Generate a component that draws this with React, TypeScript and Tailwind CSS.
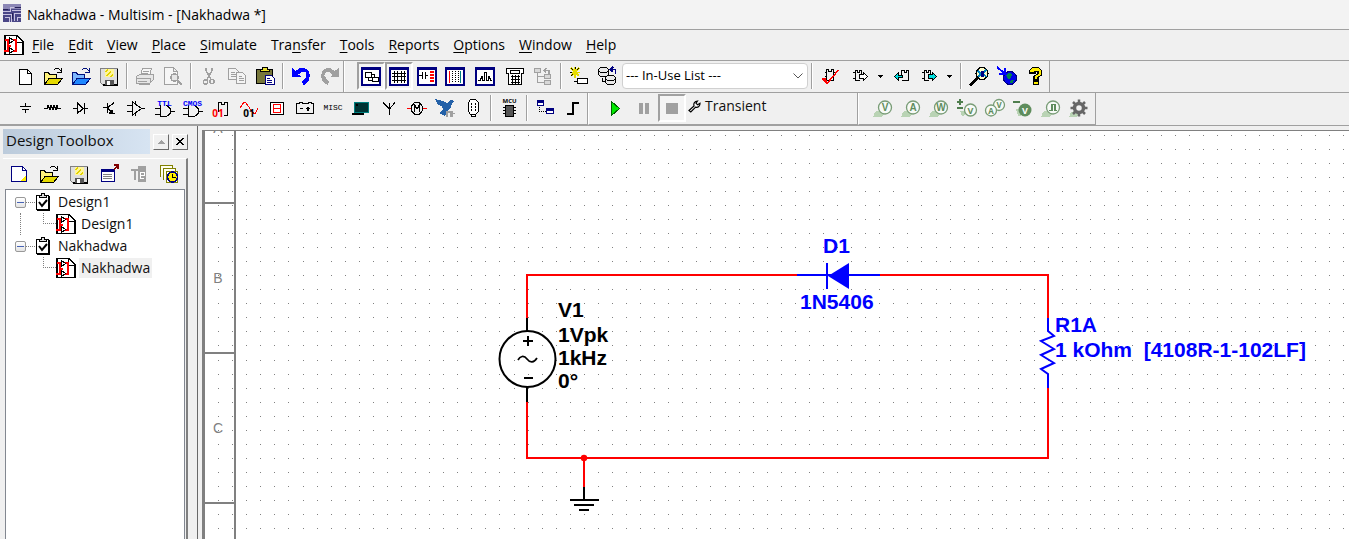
import React from "react";

type Kids = { children: React.ReactNode };

const K = "#000";
const N = "#000080";
const B = "#0000ff";
const R = "#ff0000";
const G = "#a0a0a0";

function Icon({ children }: Kids) {
  return (
    <svg
      width="20"
      height="20"
      viewBox="0 0 20 20"
      fill="none"
      stroke={K}
      shapeRendering="crispEdges"
      className="shrink-0 overflow-visible"
      aria-hidden="true"
    >
      {children}
    </svg>
  );
}

function Tool({ label, children, pressed = false }: Kids & { label: string; pressed?: boolean }) {
  return (
    <button
      type="button"
      aria-label={label}
      className={
        pressed
          ? "flex h-7 w-7 shrink-0 items-center justify-center border-2 border-b-white border-l-[#a0a0a0] border-r-white border-t-[#a0a0a0] bg-[#f4f4f4]"
          : "flex h-7 w-7 shrink-0 items-center justify-center"
      }
    >
      <Icon>{children}</Icon>
    </button>
  );
}

function Sep() {
  return <span className="mx-[3px] h-[26px] w-0.5 shrink-0 border-l border-r border-l-[#a0a0a0] border-r-white" />;
}

function Bar({ children, className = "" }: Kids & { className?: string }) {
  return (
    <div
      className={
        "flex items-center border-r border-r-[#a0a0a0] border-b-[#a0a0a0] pb-px " + className
      }
    >
      {children}
    </div>
  );
}

function SchematicFile() {
  return (
    <svg width="20" height="20" viewBox="0 0 20 20" fill="none" stroke={K} shapeRendering="crispEdges" className="shrink-0" aria-hidden="true">
      <path d="M1 .5h12l6 6v13H1z" fill="#fff" strokeWidth="1.4" />
      <path d="M12.5 .5v7h7" />
      <path d="M1 4.500h4M4 4v12M0 16h5M4 10.500h3M9 5h3v10.500H8" stroke={R} strokeWidth="2" />
      <path d="M5.500 2.500v6l4-3zM5.500 12.500v6l4-3z" fill="#fff" />
    </svg>
  );
}

function OpenFolder({ back, flap, line }: { back: string; flap: string; line: string }) {
  return (
    <>
      <path d="M1.500 18.500V6.500h4l1 2h7v3.500h4" fill={back} stroke={line} />
      <path d="M1.500 18.500l4.500-6h13.500l-5 6z" fill={flap} stroke={line} />
      <path d="M10.500 4.500l2-2h3l3 3M18.500 1.500v5h-5" stroke={line} />
    </>
  );
}

function Floppy() {
  return (
    <>
      <path d="M1.500 2.500h17v16h-15l-2-2z" fill="#dedede" stroke="#808080" />
      <path d="M18.500 2.500v16.500h-15" stroke={K} strokeWidth="1.500" />
      <path d="M6 3h9v8H6z" fill="#fff69a" stroke="none" />
      <path d="M6 5h1V4h1V3h1M7 9h1V8h1V7h1V6h1V5h1M11 10h1V9h1V8h1" stroke="#e3d200" />
      <path d="M6 14h9v5H6z" fill="#555" stroke="none" />
      <path d="M8 15h3v4H8z" fill="#fff" stroke="none" />
    </>
  );
}

function Gate({ label }: { label: string }) {
  return (
    <>
      <path d="M5.500 7v11.500h6l4-3v-5l-4-3M0 10.500h5M0 16.500h5M15.500 13.500H20" strokeWidth="1.200" />
      <text x="9.500" y="8" fontSize="8" fontWeight="700" textAnchor="middle" fill={B} stroke="none" className="font-[Liberation_Mono,monospace]">
        {label}
      </text>
    </>
  );
}

function Frame({ children }: Kids) {
  return (
    <>
      <path d="M1 2h18v17H1z" fill="#fff" stroke={N} strokeWidth="2" />
      <path d="M0 2.500h20" stroke={N} strokeWidth="3" />
      {children}
    </>
  );
}

function Probe({ letter }: { letter: string }) {
  return (
    <>
      <path d="M0 19l2-5 5-2 4 4-3 3z" fill="#b9d3b4" stroke="none" />
      <circle cx="12" cy="9.500" r="6.500" fill="#f7faf7" stroke="#789c76" strokeWidth="1.300" shapeRendering="auto" />
      <text x="12" y="13" fontSize="10" fontWeight="700" textAnchor="middle" fill="#5f8d5d" stroke="none" className="font-[Liberation_Sans,sans-serif]">
        {letter}
      </text>
    </>
  );
}

function Dropper({ label }: { label: string }) {
  return (
    <button type="button" aria-label={label} className="flex h-7 w-[13px] shrink-0 items-center pl-[3px]">
      <svg width="5" height="3" viewBox="0 0 5 3" shapeRendering="crispEdges" aria-hidden="true">
        <path d="M0 0h5v1H4v1H3v1H2V2H1V1H0z" />
      </svg>
    </button>
  );
}

const menus: [string, string, string][] = [
  ["", "F", "ile"],
  ["", "E", "dit"],
  ["", "V", "iew"],
  ["", "P", "lace"],
  ["", "S", "imulate"],
  ["Tra", "n", "sfer"],
  ["", "T", "ools"],
  ["", "R", "eports"],
  ["", "O", "ptions"],
  ["", "W", "indow"],
  ["", "H", "elp"],
];

function StandardToolbar() {
  return (
    <div className="flex h-8 w-full shrink-0 border-b border-[#a0a0a0]">
      <Bar className="pl-[11px]">
        <Tool label="New">
          <path d="M4.500 3.500h8l4 4v11h-12z" fill="#fff" strokeWidth="1.300" />
          <path d="M12.500 3.500v4h4" />
        </Tool>
        <Tool label="Open">
          <OpenFolder back="#fff27a" flap="#e5d900" line="#000" />
        </Tool>
        <Tool label="Open sample">
          <OpenFolder back="#7db7ff" flap="#1f87ff" line="#00107c" />
        </Tool>
        <Tool label="Save">
          <Floppy />
        </Tool>
        <Sep />
        <Tool label="Print">
          <g stroke={G}>
            <path d="M5.500 9.500l2-7h9l-2 7M8 5.500h6M7 7.500h6" fill="#f6f6f6" />
            <path d="M1.500 10.500l3-2h14v5l-4 4h-13z" fill="#e6e6e6" />
            <path d="M1 12.500h14M15.500 12v5M3 15.500h9M4 18.500h11" strokeWidth="1.500" />
          </g>
        </Tool>
        <Tool label="Print preview">
          <g stroke={G}>
            <path d="M1.500 1.500h9l4 4v13h-13zM10.500 1.500v4h4" fill="#f6f6f6" />
            <circle cx="11.500" cy="11.500" r="3.500" fill="#e6e6e6" strokeWidth="1.500" />
            <path d="M14 14l5 5" strokeWidth="2.500" />
          </g>
        </Tool>
        <Sep />
        <Tool label="Cut">
          <g stroke={G} strokeWidth="1.500">
            <path d="M7 1.500v3l5 9M13 1.500v3l-5 9" />
            <circle cx="6.500" cy="16" r="2" />
            <circle cx="13" cy="15.500" r="2" />
          </g>
        </Tool>
        <Tool label="Copy">
          <g stroke={G}>
            <path d="M1.500 2.500h7l3 3v8h-10zM4 6.500h4M4 8.500h5M4 10.500h5" fill="#f4f4f4" />
            <path d="M9.500 6.500h6l3 3v8h-9zM12 10.500h3M12 12.500h5M12 14.500h5" fill="#f4f4f4" />
          </g>
        </Tool>
        <Tool label="Paste">
          <path d="M1.500 3.500h16v14h-16z" fill="#77773b" strokeWidth="1.500" />
          <path d="M5 5.500V3h2V1h5v2h2v2.500z" fill="#e9df2d" />
          <path d="M10.500 9.500h6l3 3v6h-9z" fill="#fff" stroke={N} />
          <path d="M12 12.500h3M12 14.500h5M12 16.500h5" stroke={N} />
        </Tool>
        <Sep />
        <Tool label="Undo">
          <path d="M1 2v9h9L7.500 8.500l4-3 3 1 1 3-1.500 3-3 3 1 3.500 3-1 3-4 1-5-2-5-4-2H9L4.500 5z" fill={B} stroke="none" />
        </Tool>
        <Tool label="Redo">
          <path d="M20 2v9h-9l2.500-2.500-4-3-3 1-1 3 1.500 3 3 3-1 3.500-3-1-3-4-1-5 2-5 4-2h3l4.500 3z" fill={G} stroke="none" />
        </Tool>
      </Bar>
      <Bar className="border-l border-l-white pl-3">
        <Tool label="Design toolbox" pressed>
          <Frame>
            <path d="M4.500 6.500h6v5h-6zM11.500 11.500h6v4h-6zM7.500 11.500v3h4M10.500 8.500h3v3" strokeWidth="1.400" />
          </Frame>
        </Tool>
        <Tool label="Spreadsheet" pressed>
          <Frame>
            <path d="M3 7.500h14M3 10.500h14M3 14.500h14M5.500 5v12M8.500 5v12M12.500 5v12M15.500 5v12" strokeWidth="1.200" />
          </Frame>
        </Tool>
        <Tool label="Database manager">
          <Frame>
            <path d="M2 9.500h3M5.500 6v7M8.500 6v7M8 9.500h3" strokeWidth="1.400" />
            <path d="M13 5.500h4M13 8.500h4M13 11.500h4M13 14.500h4" stroke={R} strokeWidth="2" />
          </Frame>
        </Tool>
        <Tool label="Breadboard">
          <Frame>
            <path d="M4.500 5v12" stroke={R} />
            <path d="M15.500 5v12" stroke="#008080" />
            <path d="M7.500 5v12M10.500 5v12M13.500 5v12" strokeDasharray="1 1" />
          </Frame>
        </Tool>
        <div className="w-0.5" />
        <Tool label="Grapher">
          <Frame>
            <path d="M3 14.500h2l2-4 1 4h1l1-8h1l1 8h1l1-4 2 4h1" strokeWidth="1.200" />
          </Frame>
        </Tool>
        <div className="w-0.5" />
        <Tool label="Postprocessor">
          <path d="M1.500 2.500h17v5h-2v11h-13v-11h-2z" fill="#fff" strokeWidth="1.500" />
          <path d="M5.500 4.500h9v3h-9zM6 10.500h9M6 13.500h9M6 16.500h9M7.500 9v9M10.500 9v9M13.500 9v9" />
        </Tool>
        <Tool label="Parent sheet">
          <g stroke={G} fill="#d8d8d8">
            <path d="M1.500 2.500h6v4h-6zM11.500 8.500h6v4h-6zM11.500 14.500h6v4h-6z" />
            <path d="M4.500 7v9.500h7M4.500 10.500h7M11 4.500h5v3M13 2l-2 2.500 2 2" fill="none" strokeWidth="1.500" />
          </g>
        </Tool>
        <Sep />
        <Tool label="Create component">
          <path d="M6 1v11M1 6.500h10M2 2l8 8M10 2l-8 8" stroke="#e7dc00" strokeWidth="1.700" />
          <path d="M6 1v2M1 6h2M2 2l2 2M10 2L8 4M2 10l2-2" />
          <path d="M8.500 12.500h10v5h-10zM5 15.500h4" fill="#fff" strokeWidth="1.500" />
        </Tool>
        <Tool label="Database">
          <g fill="#e8e8e8">
            <path d="M1.500 3.500l2-2h6l2 2v5l-2 2h-6l-2-2z" />
            <path d="M1.500 4.500l2 2h6l2-2" />
            <path d="M8.500 11.500l2-2h6l2 2v5l-2 2h-6l-2-2z" />
            <path d="M8.500 12.500l2 2h6l2-2M5.500 11.500v4h3" />
            <path d="M14 3.500h4.500v4M16 1l-2.500 2.500L16 6" stroke={N} fill="none" strokeWidth="1.500" />
          </g>
        </Tool>
        <div className="relative ml-px flex shrink-0">
          <select
            aria-label="In-use components"
            className="h-[26px] w-[186px] appearance-none rounded-sm border border-[#d0d0d0] bg-white pl-[3px] text-[13px] text-black"
            defaultValue="list"
          >
            <option value="list">--- In-Use List ---</option>
          </select>
          <svg width="10" height="6" viewBox="0 0 10 6" fill="none" stroke="#555" className="pointer-events-none absolute right-[5px] top-2.5" aria-hidden="true">
            <path d="M.5 .5L5 5 9.500 .5" />
          </svg>
        </div>
        <Sep />
        <Tool label="Electrical rules check">
          <path d="M6.500 14V3.500h2v2h3v-2h2V14M6 14.500h8M5 6.500h1M5 10.500h1M14 6.500h1" strokeWidth="1.200" />
          <path d="M2 12.500l5 5L18.500 4" stroke={R} strokeWidth="1.500" />
          <path d="M2 12h4l1 4-1 2z" fill={R} stroke="none" />
        </Tool>
        <div className="w-[3px]" />
        <Tool label="Transfer to layout">
          <path d="M4.500 14.500v-10h2v2h2v-2h2v4M4 14.500h5M2 6.500h2M2 12.500h2" strokeWidth="1.300" />
          <path d="M8.500 8.500h4v-2l4 4-4 4v-2h-4z" fill="#fff" />
        </Tool>
        <Dropper label="Transfer options" />
        <Tool label="Back annotate">
          <path d="M9.500 14.500h7v-10h-2v2h-2v-2h-3v4" strokeWidth="1.300" />
          <path d="M10.500 9.500h-4v-3l-4 4 4 4v-3h4z" fill="#00dede" />
        </Tool>
        <Tool label="Forward annotate">
          <path d="M4.500 14.500v-10h2v2h2v-2h2v4M4 14.500h5M2 6.500h2M2 12.500h2" strokeWidth="1.300" />
          <path d="M8.500 8.500h4v-2l4 4-4 4v-2h-4z" fill="#00dede" />
        </Tool>
        <Dropper label="Forward annotate options" />
        <Sep />
        <Tool label="Find examples">
          <path d="M1 19.500l8-8" strokeWidth="2.500" />
          <circle cx="13" cy="7.500" r="6" fill="#fffec6" strokeWidth="1.300" />
          <path d="M9 5l3 3-3 3M17 4l-3 3 3 4" stroke="#0080c0" strokeWidth="1.500" />
          <path d="M12 5h2v5h-2z" fill={N} stroke={N} />
        </Tool>
        <Tool label="Educational website">
          <circle cx="13" cy="12" r="6.500" fill="#0000e8" stroke={N} />
          <path d="M9 9l3-2 3 1-1 4-3 1zM14 14h3l-1 3h-3z" fill="#008050" stroke="none" />
          <path d="M0 1l7 6M2 7.500h5.500V2" stroke={B} strokeWidth="2" />
        </Tool>
        <Tool label="Help">
          <path d="M4.500 7V4.500l3-3h6l3 3V9l-3.500 2.500V14h-4v-4l4-2V5.500h-3V7z" fill="#ffee00" strokeWidth="1.200" />
          <path d="M8.500 15.500h5v3h-5z" fill="#ffee00" strokeWidth="1.200" />
        </Tool>
      </Bar>
    </div>
  );
}

function ComponentToolbar() {
  return (
    <div className="flex h-8 w-full shrink-0">
      <Bar className="border-b pl-[11px]">
        <Tool label="Place source">
          <path d="M5 8.500h11M10.500 5v3M7 11.500h7M10.500 12v3" strokeWidth="1.400" />
        </Tool>
        <Tool label="Place basic">
          <path d="M1 10.500h3l1-3 2 4 1-4 2 4 1-4 2 4 1-4 1 3h3" />
        </Tool>
        <Tool label="Place diode">
          <path d="M2 10.500h4M6.500 5v10l6-4.500zM13.500 5v11M13 10.500h4" strokeWidth="1.300" />
        </Tool>
        <Tool label="Place transistor">
          <path d="M4 9.500h4M8.500 5v10M9 9.500l6-5M9 10.500l5 5h2M13 12v3h-3" strokeWidth="1.300" />
        </Tool>
        <Tool label="Place analog">
          <path d="M5.500 4v13l9-6.500zM0 7.500h5M0 13.500h5M14 10.500h4M8 5.500l1-2M8 15.500l1 2" />
        </Tool>
        <Tool label="Place TTL">
          <Gate label="TTL" />
        </Tool>
        <Tool label="Place CMOS">
          <Gate label="CMOS" />
        </Tool>
        <Tool label="Place misc digital">
          <path d="M7.500 14V4.500h3v2h3v-2h3v13h-4" strokeWidth="1.300" />
          <text x="7" y="19" fontSize="10" fontWeight="700" textAnchor="middle" fill={R} stroke="none">01</text>
        </Tool>
        <Tool label="Place mixed">
          <path d="M1 10l4-6h1l4 5 3 5 3 2 3-6" stroke={R} />
          <text x="10" y="19" fontSize="10" fontWeight="700" textAnchor="middle" fill={K} stroke="none">01</text>
        </Tool>
        <Tool label="Place indicator">
          <path d="M3.500 4.500h13v12h-13z" fill="#fff" strokeWidth="1.300" />
          <path d="M6 6.500h8M6 10.500h8M6 14.500h8M6.500 6v9M13.500 6v9" stroke={R} strokeWidth="1.300" />
        </Tool>
        <Tool label="Place power">
          <path d="M1.500 5.500h3v-1h3v1h6v-1h3v1h2v10h-17zM5 10.500h3M11 10.500h4M13 9v3.500" strokeWidth="1.200" />
        </Tool>
        <Tool label="Place miscellaneous">
          <text x="10" y="12" fontSize="8" textAnchor="middle" fill={K} stroke="none" className="font-[Liberation_Mono,monospace]">MISC</text>
        </Tool>
        <Tool label="Place advanced peripherals">
          <path d="M3.500 4.500h14v10h-14z" fill="#003434" stroke="#008080" strokeWidth="1.500" />
          <path d="M1 15.500h12M5 6.500h2" strokeWidth="2" />
        </Tool>
        <Tool label="Place RF">
          <path d="M10.500 5v12M4 4.500l6 6h1l5-6" />
        </Tool>
        <Tool label="Place electromechanical">
          <path d="M0 10.500h4M16 10.500h4" stroke={R} strokeWidth="1.500" />
          <path d="M4.500 8.500l3-4h5l3 4v4l-3 4h-5l-3-4zM7.500 14V7l2.500 4 2.500-4v7" strokeWidth="1.200" />
        </Tool>
        <Tool label="Place NI component">
          <path d="M0 1l8 2 4 2 4-3 3 1-2 2-1 5-4 3-2 5-6-3 4-3-1-4-4-1z" fill="#2461a8" stroke="none" />
          <path d="M12 19v-5h4v5M17.500 13v6M16.500 15.500h3" stroke={G} strokeWidth="1.500" />
        </Tool>
        <Tool label="Place connector">
          <path d="M5.500 4.500l2-3h5l3 3v9l-3 3h-5l-2-3zM8.500 17v1.500h4V16" fill="#fff" />
          <path d="M8.500 5v9M12.500 5v9" strokeDasharray="2 1" />
        </Tool>
        <Sep />
        <Tool label="Place MCU">
          <path d="M6.500 7.500h8v11h-8zM4 9.500h2M4 12.500h2M4 15.500h2M14 9.500h3M14 12.500h3M14 15.500h3" fill="#555" strokeWidth="1.500" />
          <text x="10.500" y="5" fontSize="6" fontWeight="700" textAnchor="middle" fill={K} stroke="none">MCU</text>
        </Tool>
        <Sep />
        <Tool label="Place hierarchical block">
          <path d="M2.500 3.500h6v4h-6zM11.500 11.500h7v4h-7z" fill="#fff" stroke={N} />
          <path d="M2 3.500h7M11 11.500h8" stroke={N} strokeWidth="2.500" />
          <path d="M4.500 9v4.500h6" strokeDasharray="1 1" />
        </Tool>
        <Tool label="Place bus">
          <path d="M4 16h6V5h6" strokeWidth="1.700" />
        </Tool>
      </Bar>
      <Bar className="w-[270px] border-b border-l border-l-white pl-[13px]">
        <Tool label="Run">
          <path d="M5.500 3.500v14l8-7z" fill="#00e800" stroke="#006000" />
        </Tool>
        <Tool label="Pause">
          <path d="M5 5h4v11H5zM11 5h4v11h-4z" fill={G} stroke="none" />
        </Tool>
        <Tool label="Stop" pressed>
          <path d="M4 5h12v11H4z" fill={G} stroke="none" />
        </Tool>
        <button type="button" className="ml-0.5 flex h-7 items-center gap-1 pb-1 text-sm text-[#101010]">
          <svg width="13" height="13" viewBox="0 0 13 13" fill="#fff" stroke={K} strokeWidth="1.200" aria-hidden="true">
            <path d="M1 10.500L6 6c-.8-2.500.7-4.800 3.500-5L8 3.200l1.600 1.600L12 3.300c.2 2.700-2 4.600-4.400 3.900L2.800 12z" />
          </svg>
          Transient
        </button>
      </Bar>
      <Bar className="border-b border-l border-l-white pl-2.5 pr-0.5">
        <Tool label="Voltage probe"><Probe letter="V" /></Tool>
        <Tool label="Current probe"><Probe letter="A" /></Tool>
        <Tool label="Power probe"><Probe letter="W" /></Tool>
        <Tool label="Differential probe">
          <path d="M0 3.500h6M3 1v6M0 10h6" stroke="#4f7e4e" strokeWidth="2" />
          <path d="M3 13h5v4l-3 1z" fill="#b9d3b4" stroke="none" />
          <circle cx="13.500" cy="12" r="6" fill="#f7faf7" stroke="#789c76" strokeWidth="1.300" shapeRendering="auto" />
          <text x="13.500" y="15.500" fontSize="9" fontWeight="700" textAnchor="middle" fill="#5f8d5d" stroke="none">V</text>
        </Tool>
        <Tool label="Voltage and current probe">
          <g fill="#f7faf7" stroke="#789c76" strokeWidth="1.300" shapeRendering="auto">
            <circle cx="14" cy="7" r="5.500" />
            <circle cx="6" cy="12.500" r="5.500" />
          </g>
          <g fontSize="8" fontWeight="700" textAnchor="middle" fill="#5f8d5d" stroke="none">
            <text x="14" y="10">V</text>
            <text x="6" y="15.500">A</text>
          </g>
        </Tool>
        <Tool label="Reference probe">
          <path d="M0 4h7" stroke="#4f7e4e" strokeWidth="2" />
          <path d="M3 11l5-1 2 7-5 1z" fill="#b9d3b4" stroke="none" />
          <circle cx="12" cy="12" r="6.500" fill="#5f8d5d" stroke="none" shapeRendering="auto" />
          <text x="12" y="15.500" fontSize="9" fontWeight="700" textAnchor="middle" fill="#fff" stroke="none">V</text>
        </Tool>
        <Tool label="Digital probe">
          <Probe letter="" />
          <path d="M8 12.500h3v-6h3v6h2" stroke="#5f8d5d" strokeWidth="1.300" />
        </Tool>
        <Tool label="Probe settings">
          <path d="M0 19l2-5 4-1 4 3-3 3z" fill="#b9d3b4" stroke="none" />
          <g stroke="#666" shapeRendering="auto">
            <circle cx="10" cy="10" r="4.500" strokeWidth="3.500" />
            <path d="M10 1.500v4M10 14.500v4M1.500 10h4M14.500 10h4M4 4l3 3M13 13l3 3M4 16l3-3M13 7l3-3" strokeWidth="2.500" />
          </g>
        </Tool>
      </Bar>
    </div>
  );
}

function Check() {
  return (
    <svg width="16" height="18" viewBox="0 0 16 18" fill="none" stroke={K} shapeRendering="crispEdges" className="shrink-0" aria-hidden="true">
      <path d="M1.500 2.500h12v14h-12z" fill="#fff" />
      <path d="M14 3v14H2" strokeWidth="2" />
      <path d="M4.500 4.500v-2h2v-2h3v2h2v2z" fill="#ddd" />
      <path d="M4 9l3 4L12 7" strokeWidth="2" shapeRendering="auto" />
    </svg>
  );
}

function Design({ name, last = false }: { name: string; last?: boolean }) {
  return (
    <li>
      <div className="flex h-[22px] items-center">
        <button type="button" aria-label={"Collapse " + name} className="flex h-[11px] w-[11px] items-center justify-center rounded-xs border border-[#999] bg-gradient-to-b from-white to-[#e4e4e4]">
          <span className="h-px w-[7px] bg-[#4763b5]" />
        </button>
        <span className="w-[9px] border-t border-dotted border-[#808080]" />
        <Check />
        <span className="ml-[7px]">{name}</span>
      </div>
      <ul className={last ? "ml-[5px] border-l border-transparent" : "ml-[5px] border-l border-dotted border-[#808080]"}>
        <li className="flex h-[22px] items-center pl-[22px]">
          <span className="mb-[11px] h-[11px] w-[13px] border-b border-l border-dotted border-[#808080]" />
          <SchematicFile />
          <span className={last ? "ml-[3px] bg-[#f0f0f0] px-0.5" : "ml-[3px] px-0.5"}>{name}</span>
        </li>
      </ul>
    </li>
  );
}

function DesignToolbox() {
  return (
    <aside className="flex w-[197px] shrink-0 flex-col pl-[3px] pr-[9px] pt-[3px]">
      <header className="flex h-[25px] items-center gap-[3px]">
        <h2 className="flex h-full w-[147px] items-center bg-gradient-to-r from-[#bccbdb] to-[#d7e4f2] pb-[3px] pl-[3px] text-[15px] text-[#101010]">Design Toolbox</h2>
        <button type="button" aria-label="Roll up" className="flex h-4 w-4 items-center justify-center border border-b-[#696969] border-l-white border-r-[#696969] border-t-white">
          <svg width="7" height="4" viewBox="0 0 7 4" shapeRendering="crispEdges" aria-hidden="true"><path d="M0 4l3.500-4L7 4z" fill={G} /></svg>
        </button>
        <button type="button" aria-label="Close" className="flex h-4 w-4 items-center justify-center border border-b-[#696969] border-l-white border-r-[#696969] border-t-white">
          <svg width="8" height="7" viewBox="0 0 8 7" shapeRendering="crispEdges" stroke={K} strokeWidth="2" aria-hidden="true"><path d="M.5 0l7 7M7.500 0l-7 7" /></svg>
        </button>
      </header>
      <div className="mt-1 flex flex-1 flex-col border-r-2 border-t border-r-[#808080] border-t-white">
        <div className="flex h-[30px] shrink-0 items-center gap-[2px] pl-0.5">
          <Tool label="New design">
            <path d="M2.500 2.500h11l4 4v11h-15z" fill="#fff" stroke={N} strokeWidth="1.400" />
            <path d="M13.500 2.500v4h4" stroke={N} />
            <path d="M17 11v6h-6z" fill="#ffee00" stroke="none" />
          </Tool>
          <Tool label="Open design"><OpenFolder back="#fff27a" flap="#e5d900" line="#000" /></Tool>
          <Tool label="Save design"><Floppy /></Tool>
          <Tool label="Close design">
            <path d="M2.500 5.500h13v12h-13z" fill="#fff" stroke={N} />
            <path d="M2 6h14" stroke={N} strokeWidth="3" />
            <path d="M4 10.500h9M4 12.500h9M4 14.500h9" stroke="#808080" />
            <path d="M15 5l4-3M15 1h4v4" stroke="#800000" strokeWidth="1.500" />
          </Tool>
          <Tool label="Rename">
            <path d="M2 5h8v2H7v9H5V7H2zM9 2h8v16H9z" fill={G} stroke="none" />
            <path d="M11 11.500h4v-3h-4v6h4" stroke="#fff" />
          </Tool>
          <Tool label="Versions">
            <path d="M1.500 13V1.500h12V4M4.500 16V4.500h12V7M7.500 18V7.500h11V18z" fill="#fffff0" stroke="#808000" />
            <circle cx="13.500" cy="13" r="5" fill="#ffee00" stroke={N} strokeWidth="1.500" />
            <path d="M13.500 10v3.500h3" />
          </Tool>
        </div>
        <ul className="ml-0.5 mr-px flex-1 border border-b-0 border-[#828790] bg-white pl-[9px] pt-px text-sm text-[#101010]">
          <Design name="Design1" />
          <Design name="Nakhadwa" last />
        </ul>
      </div>
    </aside>
  );
}

const columns = Array.from({ length: 160 }, (_, i) => Math.round(218.1 + 14.0667 * i));
const rows = Array.from({ length: 80 }, (_, i) => Math.round(135.02 + 14.03 * i));
const dots = rows.map((y) => columns.map((x) => `M${x} ${y}h1v1h-1z`).join("")).join("");

function Schematic() {
  return (
    <main className="relative flex flex-1 overflow-hidden bg-white">
      <div className="flex w-[31px] shrink-0 flex-col border-r-2 border-[#808080] text-center font-[Liberation_Sans,sans-serif] text-[14px] leading-4 text-[#808080]">
        <div className="h-[73px] shrink-0 border-b-2 border-[#808080] pr-[3px]">
          <div className="-mt-[11px]">A</div>
        </div>
        <div className="flex h-[150px] shrink-0 items-center justify-center border-b-2 border-[#808080] pr-[3px]">B</div>
        <div className="flex h-[150px] shrink-0 items-center justify-center border-b-2 border-[#808080] pr-[3px]">C</div>
      </div>
      <svg className="absolute inset-0 h-full w-full" fill="none" strokeWidth="2" aria-label="Half-wave rectifier circuit">
        <g transform="translate(-205 -131)">
          <path d={dots} fill="#808080" shapeRendering="crispEdges" />
          <path d="M527 318V275H797M880 275H1048V318M1048 388V458H527V402M584 458V487" stroke={R} />
          <circle cx="584" cy="458" r="3.200" fill={R} />
          <g stroke={K}>
            <path d="M527 318v13M527 387v15M584 487v13M570 500h29M574 505h20M579 510h10" />
            <circle cx="527.500" cy="359" r="28" />
            <path d="M523 341h10M528 336v10M524 378h9" />
            <path d="M518 360c2-4 6-5 9-1s7 4 10-1" strokeWidth="1.700" />
          </g>
          <g stroke={B}>
            <path d="M797 275h83M827 263v26" />
            <path d="M828 276L849 263v26z" fill={B} stroke="none" />
            <path d="M1048 318v13l6 5-13 5 13 8-13 6 13 8-13 6 7 5v14" />
          </g>
          <g fontSize="21" fontWeight="700" className="font-[Liberation_Sans,Arial,sans-serif]">
            <g fill={K}>
              <text x="558" y="317">V1</text>
              <text x="558" y="342">1Vpk</text>
              <text x="558" y="365">1kHz</text>
              <text x="558" y="388">0°</text>
            </g>
            <g fill={B}>
              <text x="823" y="253">D1</text>
              <text x="800" y="309">1N5406</text>
              <text x="1055" y="332">R1A</text>
              <text x="1055" y="357" className="whitespace-pre">{"1 kOhm  [4108R-1-102LF]"}</text>
            </g>
          </g>
        </g>
      </svg>
    </main>
  );
}

export default function App() {
  return (
    <div className="flex h-screen flex-col overflow-hidden bg-[#f0f0f0] font-[Open_Sans,Noto_Sans,sans-serif] text-black">
      <div className="flex h-[30px] shrink-0 items-center gap-1.5 border-b border-[#a0a0a0] bg-[#f3f3f3] pl-[3px] text-sm">
        <svg width="18" height="18" viewBox="0 0 18 18" fill="none" shapeRendering="crispEdges" className="mb-1" aria-hidden="true">
          <path d="M0 0h18v18H0z" fill="#4b4787" />
          <path d="M0 0h18v5H0z" fill="#8b86b5" />
          <path d="M0 7.500h7v-4h4M0 10.500h8v7M2 13.500h4v4M11.500 17V9.500H18M14.500 17v-4H18M9 6.500h9" stroke="#c9c3e0" />
          <path d="M0 5.500h5M12 3.500h6M9.500 9v6" stroke="#262058" />
        </svg>
        <h1>Nakhadwa - Multisim - [Nakhadwa *]</h1>
      </div>
      <nav className="flex h-[31px] shrink-0 items-center gap-2 border-b border-[#a0a0a0] pl-1 text-sm">
        <SchematicFile />
        <div className="flex gap-3.5">
          {menus.map(([before, key, after]) => (
            <a key={before + key + after} href="#">
              {before}
              <span className="underline underline-offset-2">{key}</span>
              {after}
            </a>
          ))}
        </div>
      </nav>
      <StandardToolbar />
      <ComponentToolbar />
      <div className="flex min-h-0 flex-1 border-t border-[#a0a0a0]">
        <DesignToolbox />
        <div className="flex min-w-0 flex-1 border-l border-[#696969] pl-1 pt-1">
          <div className="flex min-w-0 flex-1 border-l-[3px] border-t border-[#808080]">
            <Schematic />
          </div>
        </div>
      </div>
    </div>
  );
}
